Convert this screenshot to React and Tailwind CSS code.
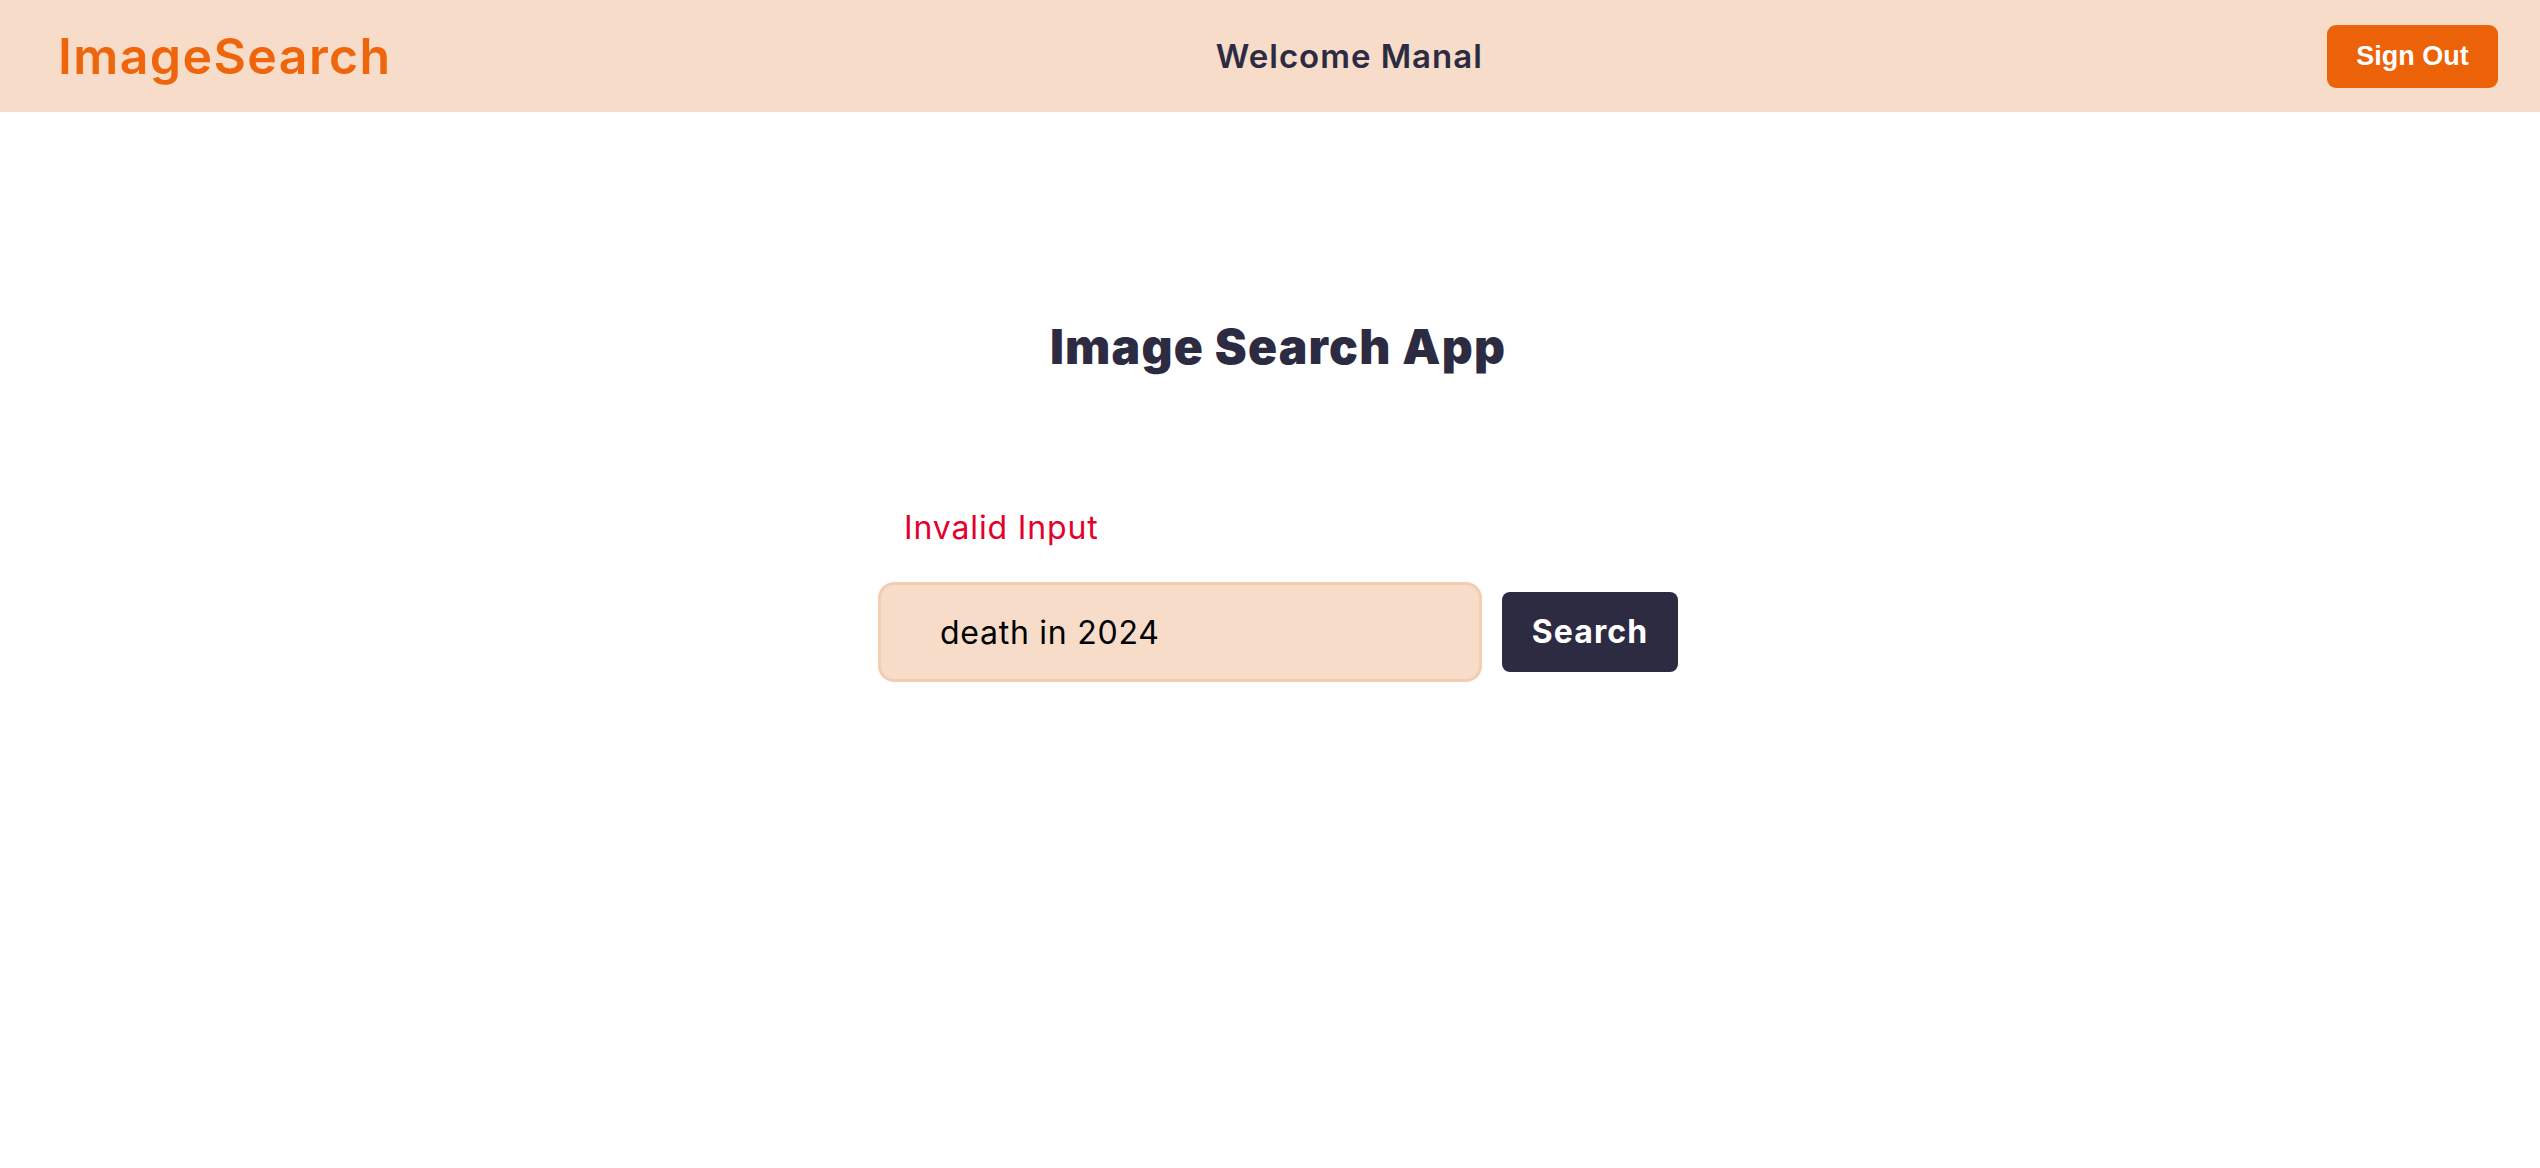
import React from "react";

const Header = () => {
  return (
    <header className="h-[112px] w-full bg-[#f7dcc9] flex items-center justify-between pl-[58px] pr-[42px]">
      <span className="text-[50px] font-semibold text-[#ef650c] tracking-[0.028em] leading-none">
        ImageSearch
      </span>
      <span className="mr-[20px] text-[33px] font-semibold text-[#2d2b42] tracking-[0.03em] leading-none">
        Welcome Manal
      </span>
      <button
        type="button"
        className="h-[63px] w-[171px] rounded-[9px] bg-[#ec6209] text-white text-[27px] font-bold font-['Liberation_Sans',Arial,sans-serif]"
      >
        Sign Out
      </button>
    </header>
  );
};

const SearchForm = () => {
  return (
    <div className="mt-[121px] flex flex-col w-[800px]">
      <p className="pl-[26px] text-[32px] leading-[48px] text-[#e4002b] tracking-[0.027em]">
        Invalid Input
      </p>
      <div className="mt-[30px] flex items-center gap-[20px]">
        <input
          type="text"
          defaultValue="death in 2024"
          className="h-[100px] w-[604px] rounded-[16px] border-[3px] border-[#f2cdb1] bg-[#f7dcc9] pl-[59px] text-[32px] tracking-[0.023em] text-black outline-none"
        />
        <button
          type="button"
          className="h-[80px] w-[176px] rounded-[8px] bg-[#2d2b42] text-white text-[32px] font-bold tracking-[0.034em]"
        >
          Search
        </button>
      </div>
    </div>
  );
};

export default function App() {
  return (
    <div className="min-h-[1168px] w-full bg-white font-['Inter','Noto_Sans',sans-serif]">
      <Header />
      <main className="flex flex-col items-center pl-[16px]">
        <h1 className="mt-[199px] text-[48px] leading-[72px] font-black text-[#2d2b42] tracking-[0.025em]">
          Image Search App
        </h1>
        <SearchForm />
      </main>
    </div>
  );
}
